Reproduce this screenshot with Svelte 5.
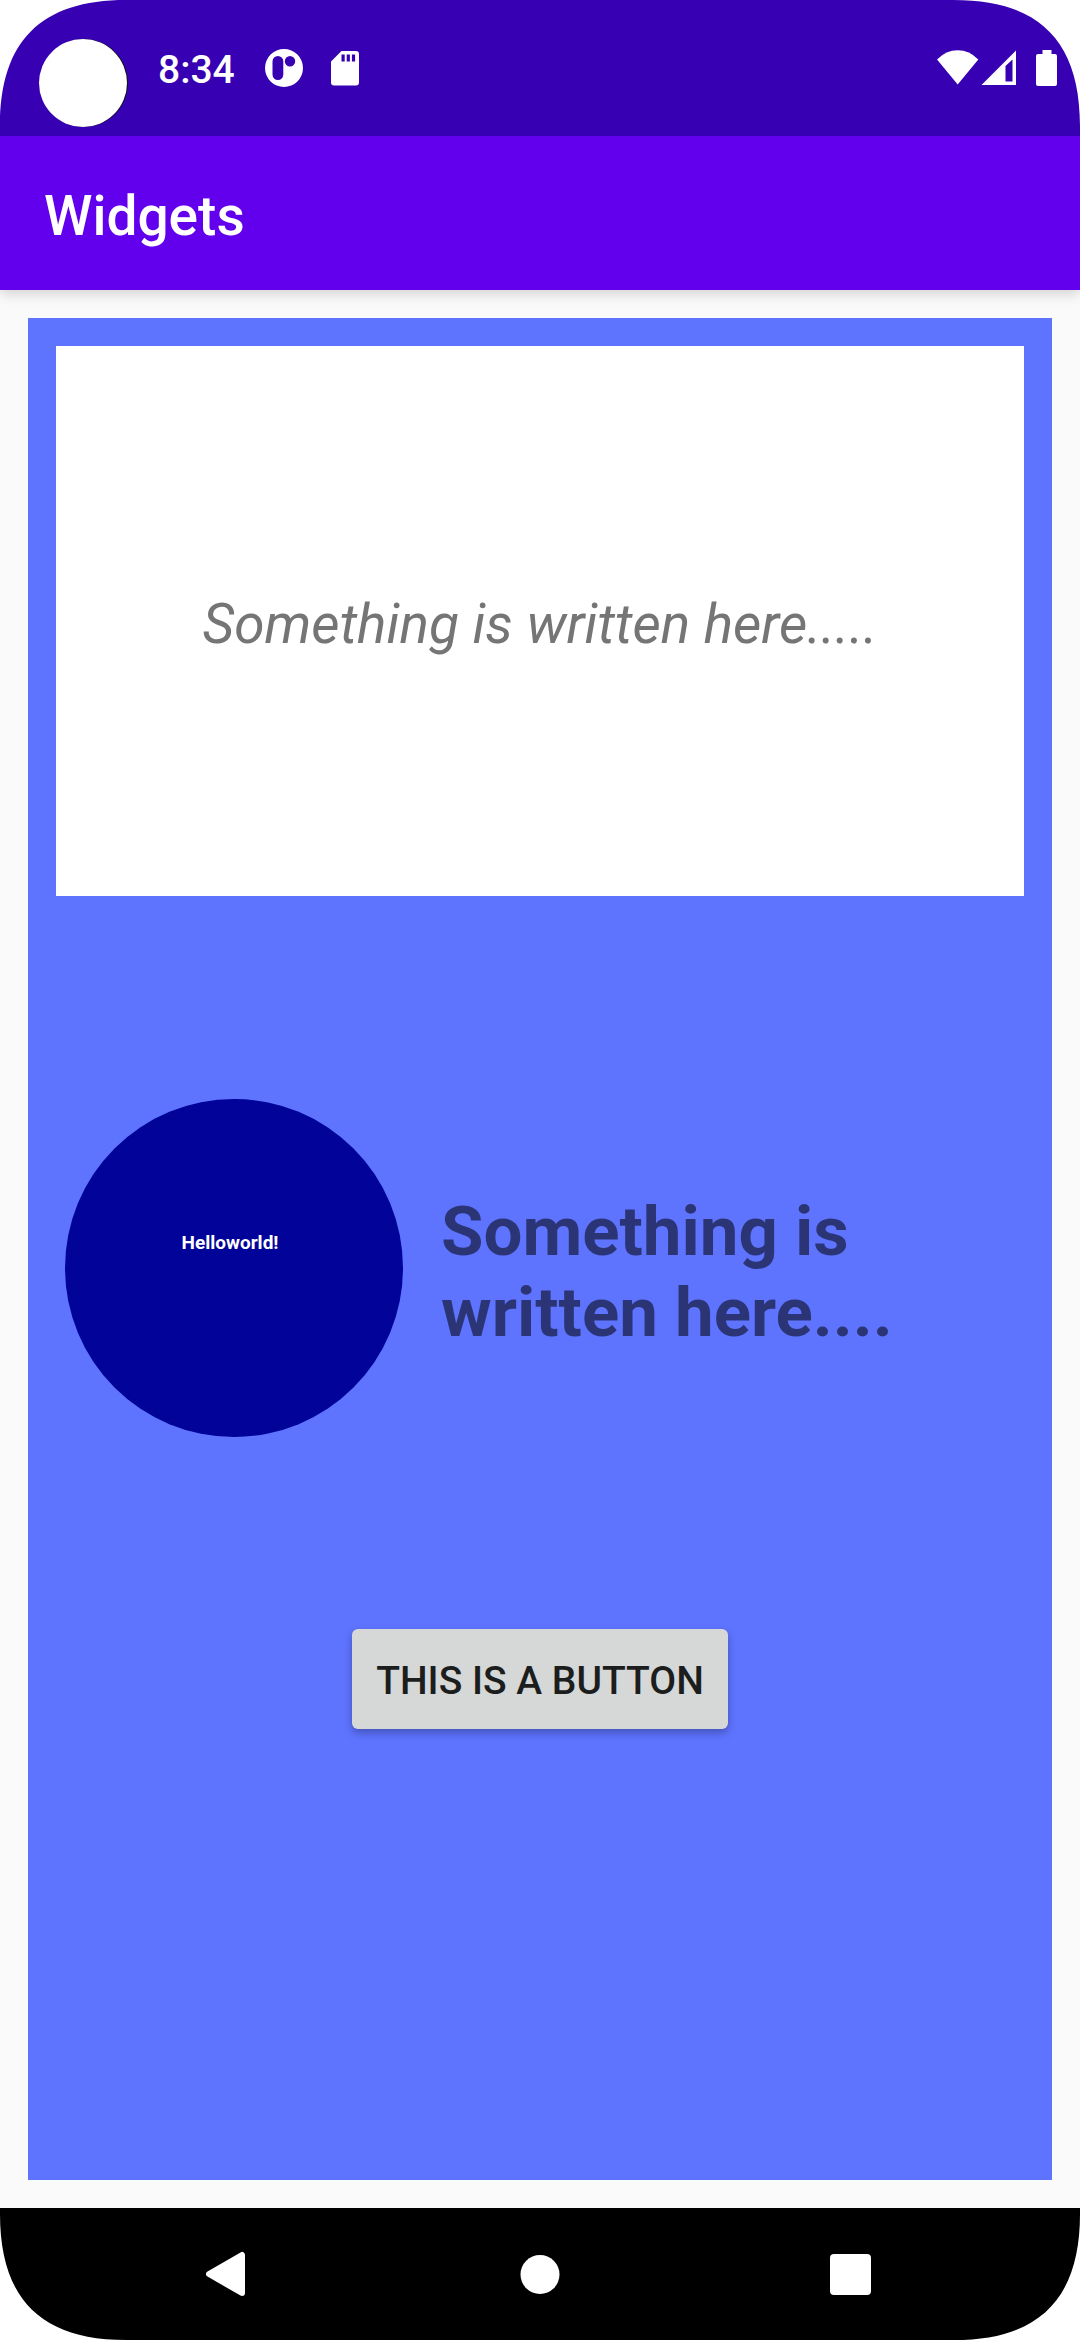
<script>
  const corners = ['top-left', 'top-right', 'bottom-left', 'bottom-right'];
</script>

<div class="screen">
  <header class="status">
    <span class="camera"></span>
    <time class="clock">8:34</time>
    <svg class="notice" width="38" height="38" viewBox="0 0 38 38" aria-hidden="true">
      <path
        fill="#fff"
        fill-rule="evenodd"
        d="M19 0a19 19 0 1 1 0 38a19 19 0 1 1 0-38zM12.900 7a5.400 5.400 0 0 0-5.400 5.400v13.200a5.400 5.400 0 0 0 10.800 0V12.400a5.400 5.400 0 0 0-5.400-5.400zM25 7a5.200 5.200 0 1 0 0 10.400a5.200 5.200 0 1 0 0-10.400z"
      />
    </svg>
    <svg class="card" width="28" height="36" viewBox="0 0 28 36" aria-hidden="true">
      <path
        fill="#fff"
        fill-rule="evenodd"
        d="M10.500 1H25a3 3 0 0 1 3 3v28.500a3 3 0 0 1-3 3H3a3 3 0 0 1-3-3V11.500zM10.500 4.500v7h3.200v-7zM15.700 4.500v7h3.200v-7zM20.900 4.500v7h3.200v-7z"
      />
    </svg>
    <div class="signals">
      <svg width="42" height="36" viewBox="0 0 42 36" aria-hidden="true">
        <path fill="#fff" d="M0 9.500Q9 .3 20.700 .3T41.300 9.500L20.700 34.500z" />
      </svg>
      <svg class="cell" width="36" height="36" viewBox="0 0 36 36" aria-hidden="true">
        <path fill="#fff" fill-rule="evenodd" d="M35 .5V35H.5zM31.500 9.500l-7 6.500v15.500h7z" />
      </svg>
      <svg class="battery" width="22" height="36" viewBox="0 0 22 36" aria-hidden="true">
        <path fill="#fff" d="M6.500 0h9v4H19a2 2 0 0 1 2 2v28a2 2 0 0 1-2 2H2a2 2 0 0 1-2-2V6a2 2 0 0 1 2-2h4.500z" />
      </svg>
    </div>
  </header>

  <div class="appbar"><h1>Widgets</h1></div>

  <main>
    <section class="panel">
      <p class="note">Something is written here.....</p>
      <div class="row">
        <div class="disc"><span>Helloworld!</span></div>
        <p class="caption">Something is written here....</p>
      </div>
      <button class="action" type="button">THIS IS A BUTTON</button>
    </section>
  </main>

  <nav>
    <button type="button" aria-label="Back">
      <svg width="48" height="48" viewBox="0 0 48 48">
        <path fill="#fff" stroke="#fff" stroke-width="6" stroke-linejoin="round" d="M38 5v38L5 24z" />
      </svg>
    </button>
    <button type="button" aria-label="Home">
      <svg width="48" height="48" viewBox="0 0 48 48"><circle cx="24" cy="24.500" r="19.500" fill="#fff" /></svg>
    </button>
    <button type="button" aria-label="Recent apps">
      <svg width="48" height="48" viewBox="0 0 48 48"><rect x="2" y="4" width="41" height="41" rx="4" fill="#fff" /></svg>
    </button>
  </nav>

  {#each corners as corner}
    <svg class="corner {corner}" width="126" height="126" viewBox="0 0 126 126" aria-hidden="true">
      <path fill="#fff" d="M0 0H126C41 0 0 41 0 126z" />
    </svg>
  {/each}
</div>

<style>
  :global(body) {
    margin: 0;
    background: #fff;
  }

  .screen {
    position: relative;
    display: flex;
    flex-direction: column;
    min-height: 100vh;
    background: #fafafa;
    font-family: Roboto, 'Liberation Sans', sans-serif;
  }

  h1,
  p {
    margin: 0;
  }

  button {
    border: 0;
    font-family: inherit;
  }

  svg {
    display: block;
  }

  .status {
    position: relative;
    z-index: 1;
    display: flex;
    align-items: center;
    box-sizing: border-box;
    height: 136px;
    padding: 0 22px 0 39px;
    background: #3700b3;
    color: #fff;
  }

  .camera {
    width: 88px;
    height: 88px;
    margin: 30px 31px 0 0;
    border-radius: 50%;
    background: #fff;
    box-shadow: 1px 0 0 #111;
  }

  .clock {
    padding-top: 3px;
    font-size: 39px;
    font-weight: 500;
    line-height: 46px;
  }

  .notice {
    margin-left: 30px;
  }

  .card {
    margin-left: 28px;
  }

  .signals {
    display: flex;
    margin-left: auto;
  }

  .cell {
    margin-left: 2px;
  }

  .battery {
    margin-left: 19px;
  }

  .appbar {
    position: relative;
    display: flex;
    align-items: center;
    height: 154px;
    padding: 0 44px;
    background: #6200ee;
    color: #fff;
    box-shadow: 0 4px 12px rgba(0, 0, 0, 0.16);
  }

  h1 {
    padding-top: 6px;
    font-size: 55px;
    font-weight: 500;
    line-height: 64px;
  }

  main {
    display: flex;
    flex: 1;
    padding: 28px;
  }

  .panel {
    display: flex;
    flex: 1;
    flex-direction: column;
    align-items: center;
    padding: 28px;
    background: #5e74ff;
  }

  .note {
    display: flex;
    align-items: center;
    justify-content: center;
    align-self: stretch;
    box-sizing: border-box;
    height: 550px;
    padding-top: 6px;
    background: #fff;
    color: #757575;
    font-size: 55px;
    font-style: italic;
    line-height: 64px;
  }

  .row {
    display: flex;
    align-items: center;
    align-self: stretch;
    gap: 38px;
    margin-top: 203px;
    padding: 0 9px;
  }

  .disc {
    display: flex;
    flex: none;
    justify-content: center;
    box-sizing: border-box;
    width: 338px;
    height: 338px;
    padding: 132px 8px 0 0;
    border-radius: 50%;
    background: #020399;
    color: #fff;
    font-size: 19px;
    font-weight: 700;
    line-height: 24px;
  }

  .caption {
    max-width: 520px;
    padding-top: 8px;
    color: rgba(0, 0, 0, 0.54);
    font-size: 69px;
    font-weight: 700;
    line-height: 81px;
  }

  .action {
    height: 100px;
    margin-top: 192px;
    padding: 4px 24px 0;
    border-radius: 6px;
    background: #d6d7d7;
    box-shadow: 0 4px 8px rgba(0, 0, 0, 0.28);
    color: #1c1d1d;
    font-size: 39px;
    font-weight: 500;
    line-height: 46px;
  }

  nav {
    display: flex;
    justify-content: center;
    height: 132px;
    background: #000;
  }

  nav button {
    display: flex;
    flex: 0 1 312px;
    align-items: center;
    justify-content: center;
    padding: 0;
    background: none;
  }

  .corner {
    position: absolute;
    z-index: 2;
  }

  .top-left {
    top: 0;
    left: 0;
  }

  .top-right {
    top: 0;
    right: 0;
    transform: scaleX(-1);
  }

  .bottom-left {
    bottom: 0;
    left: 0;
    transform: scaleY(-1);
  }

  .bottom-right {
    right: 0;
    bottom: 0;
    transform: scale(-1);
  }
</style>
